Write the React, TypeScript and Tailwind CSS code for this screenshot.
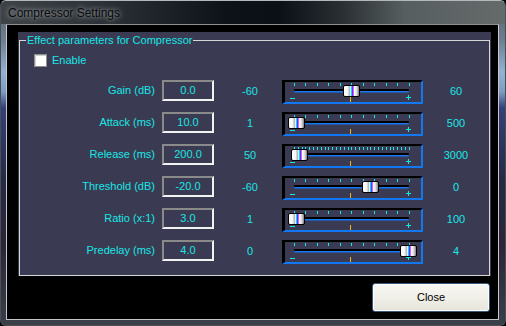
import React from 'react';

type Row = {
  label: string;
  value: string;
  min: number;
  max: number;
  v: number;
  ticks: number;
};

const rows: Row[] = [
  { label: 'Gain (dB)', value: '0.0', min: -60, max: 60, v: 0, ticks: 11 },
  { label: 'Attack (ms)', value: '10.0', min: 1, max: 500, v: 10, ticks: 11 },
  { label: 'Release (ms)', value: '200.0', min: 50, max: 3000, v: 200, ticks: 31 },
  { label: 'Threshold (dB)', value: '-20.0', min: -60, max: 0, v: -20, ticks: 11 },
  { label: 'Ratio (x:1)', value: '3.0', min: 1, max: 100, v: 3, ticks: 11 },
  { label: 'Predelay (ms)', value: '4.0', min: 0, max: 4, v: 4, ticks: 11 },
];

const CYAN = '#19e6e6';
const BLUE = '#1477f2';

function Slider({ frac, ticks }: { frac: number; ticks: number }) {
  const trackX = 9;
  const trackW = 114.7;
  const center = trackX + frac * trackW;
  const step = trackW / (ticks - 1);
  return (
    <div className="relative w-[141px] h-[24px] border-t-2 border-l-[3px] border-r-2 border-b-2 border-t-black border-l-black border-r-[#1477f2] border-b-[#1477f2]">
      <svg width="136" height="20" className="block">
        {Array.from({ length: ticks }).map((_, i) => {
          const x = Math.round(trackX + i * step) + 0.5;
          return <line key={i} x1={x} x2={x} y1={1} y2={4} stroke={CYAN} strokeWidth={1} />;
        })}
        <rect x={trackX} y={7} width={trackW} height={2} fill="#000" />
        <rect x={trackX} y={9} width={trackW} height={1.5} fill={BLUE} />
        <line x1={5} x2={10} y1={16.5} y2={16.5} stroke={CYAN} strokeWidth={1} />
        <line x1={121} x2={126} y1={15.5} y2={15.5} stroke={CYAN} strokeWidth={1} />
        <line x1={123.5} x2={123.5} y1={13} y2={18} stroke={CYAN} strokeWidth={1} />
        <line x1={65.5} x2={65.5} y1={15} y2={20} stroke="#c8c23a" strokeWidth={1} />
        <line x1={66.5} x2={66.5} y1={15} y2={20} stroke="#6a3030" strokeWidth={1} />
      </svg>
      <div
        className="absolute top-[3px] w-[17px] h-[12px] rounded-[2px] border border-black bg-[linear-gradient(90deg,#ffffff_0%,#f4f4f4_25%,#b0b0b0_36%,#ffffff_42%,#00ffff_48%,#3040ff_56%,#ff40ff_63%,#ffffff_70%,#dadada_85%,#808080_100%)]"
        style={{ left: center - 8.5 }}
      />
    </div>
  );
}

export default function App() {
  return (
    <div className="w-[506px] h-[326px] font-['Liberation_Sans',Arial,sans-serif] bg-black">
      <div className="w-[506px] h-[326px] rounded-[6px] border border-[#4a4f55] border-t-[#b4b8bc] bg-[linear-gradient(180deg,#5b6166_0%,#6d7e90_12%,#93b2d2_22%,#7e9cc4_28%,#34407a_33%,#262a44_55%,#2c2438_75%,#3a3f48_100%)] overflow-hidden flex flex-col">
        <div className="h-[23px] flex items-center pl-[7px] bg-[linear-gradient(90deg,#3e4348_0%,#2a2f35_22%,#0d1118_45%,#0b0f16_55%,#2a3034_68%,#575e5f_80%,#656b6b_100%)]">
          <span className="text-[12px] text-[#0a0a0a] [text-shadow:0_0_4px_rgba(230,235,240,0.6),0_0_9px_rgba(200,210,220,0.45)] pt-[1px]">
            Compressor Settings
          </span>
        </div>
        <div className="ml-[5px] w-[493px] h-[296px] border border-[#c4c8cc] border-t-[#8c9094] bg-black flex flex-col pt-[7px] pl-[11px] pr-[7px]">
          <div className="w-[473px] h-[244px] bg-[#3a3a52] pt-[2px] px-[1px]">
            <fieldset className="h-[242px] border border-[#d6d6d6] pl-[0px]">
              <legend className="ml-[6px] px-[1px] text-[11px] leading-[13px]" style={{ color: CYAN }}>
                Effect parameters for Compressor
              </legend>
              <div className="flex items-center gap-[5px] ml-[14px] mt-[7px] h-[13px]">
                <div className="w-[13px] h-[13px] bg-white border border-[#8f8f8f] shadow-[inset_1px_1px_0_#cfcfcf]" />
                <span className="text-[11px] leading-[13px]" style={{ color: CYAN }}>
                  Enable
                </span>
              </div>
              <div className="flex flex-col gap-[8px] mt-[13px]">
                {rows.map((r) => (
                  <div key={r.label} className="flex items-start h-[24px] text-[11px]" style={{ color: CYAN }}>
                    <div className="w-[135px] h-[21px] flex items-center justify-end">{r.label}</div>
                    <div className="ml-[7px] w-[52px] h-[21px] border-2 border-t-[#8a8a8a] border-l-[#8a8a8a] border-b-[#f2f2f2] border-r-[#f2f2f2] flex items-center justify-center">
                      {r.value}
                    </div>
                    <div className="w-[68px] h-[22px] flex items-center justify-center pl-[4px]">{r.min}</div>
                    <Slider frac={(r.v - r.min) / (r.max - r.min)} ticks={r.ticks} />
                    <div className="w-[66px] h-[22px] flex items-center justify-center">{r.max}</div>
                  </div>
                ))}
              </div>
            </fieldset>
          </div>
          <div className="flex justify-end pr-[1px] mt-[7px]">
            <button className="w-[118px] h-[29px] rounded-[3px] border border-[#3a5878] bg-[linear-gradient(180deg,#f8f7f3_0%,#f0efe8_50%,#e6e4da_100%)] shadow-[inset_0_0_0_1px_#ffffff] text-[11px] text-black">
              Close
            </button>
          </div>
        </div>
      </div>
    </div>
  );
}
